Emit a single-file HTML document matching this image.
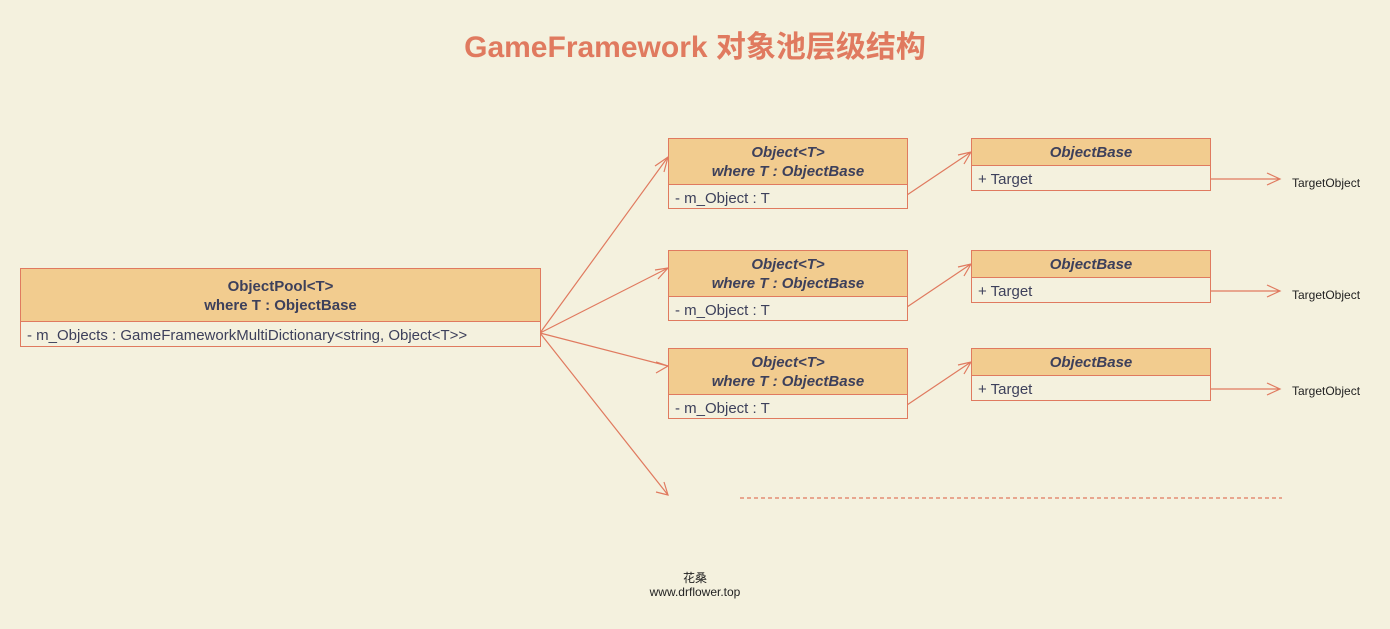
<!DOCTYPE html>
<html><head><meta charset="utf-8"><style>
body{margin:0;width:1390px;height:629px;background:#f4f1de;position:relative;overflow:hidden;font-family:"Liberation Sans","Noto Sans CJK SC",sans-serif;color:#3d405b}
.t{position:absolute;left:0;width:1390px;top:22px;text-align:center;font-size:30px;font-weight:bold;color:#e07a5f}
.box{position:absolute;border:1px solid #e07a5f;background:#f4f1de;box-sizing:border-box}
.h{background:#f2cc8f;border-bottom:1px solid #e07a5f;text-align:center;font-weight:bold;font-size:15px;line-height:19px;box-sizing:border-box}
.i{font-style:italic}
.r{font-size:15px;padding-left:6px;line-height:24px;padding-top:2px}
.s{position:absolute;font-size:12px;color:#222}
</style></head><body>
<div class="t">GameFramework 对象池层级结构</div>
<svg style="position:absolute;left:0;top:0" width="1390" height="629" fill="none" stroke="#e07a5f" stroke-width="1.2">
<path d="M540 333 L668 157 M540 333 L668 268 M540 333 L668 366 M540 333 L668 495"/>
<path d="M655 166 L668 157 L664 172 M655 270 L668 268 L658 279 M656 362 L668 366 L656 373 M656 492 L668 495 L664 482"/>
<path d="M907 195 L971 152 M958 155 L971 152 L964 164"/>
<path d="M907 307 L971 264 M958 267 L971 264 L964 276"/>
<path d="M907 405 L971 362 M958 365 L971 362 L964 374"/>
<path d="M1210 179 L1280 179 M1267 173 L1280 179 L1267 185"/>
<path d="M1210 291 L1280 291 M1267 285 L1280 291 L1267 297"/>
<path d="M1210 389 L1280 389 M1267 383 L1280 389 L1267 395"/>
<path d="M740 498 L1282 498" stroke-dasharray="4 3"/>
</svg>
<div class="box" style="left:20px;top:268px;width:521px;height:79px"><div class="h" style="height:53px;padding-top:8px">ObjectPool&lt;T&gt;<br>where T : ObjectBase</div><div class="r">- m_Objects : GameFrameworkMultiDictionary&lt;string, Object&lt;T&gt;&gt;</div></div>
<div class="box" style="left:668px;top:138px;width:240px;height:71px"><div class="h i" style="height:46px;padding-top:4px">Object&lt;T&gt;<br>where T : ObjectBase</div><div class="r">- m_Object : T</div></div>
<div class="box" style="left:668px;top:250px;width:240px;height:71px"><div class="h i" style="height:46px;padding-top:4px">Object&lt;T&gt;<br>where T : ObjectBase</div><div class="r">- m_Object : T</div></div>
<div class="box" style="left:668px;top:348px;width:240px;height:71px"><div class="h i" style="height:46px;padding-top:4px">Object&lt;T&gt;<br>where T : ObjectBase</div><div class="r">- m_Object : T</div></div>
<div class="box" style="left:971px;top:138px;width:240px;height:53px"><div class="h i" style="height:27px;padding-top:4px">ObjectBase</div><div class="r">+ Target</div></div>
<div class="box" style="left:971px;top:250px;width:240px;height:53px"><div class="h i" style="height:27px;padding-top:4px">ObjectBase</div><div class="r">+ Target</div></div>
<div class="box" style="left:971px;top:348px;width:240px;height:53px"><div class="h i" style="height:27px;padding-top:4px">ObjectBase</div><div class="r">+ Target</div></div>
<div class="s" style="left:1292px;top:176px">TargetObject</div>
<div class="s" style="left:1292px;top:288px">TargetObject</div>
<div class="s" style="left:1292px;top:384px">TargetObject</div>
<div class="s" style="left:0;width:1390px;text-align:center;top:569px">花桑</div>
<div class="s" style="left:0;width:1390px;text-align:center;top:585px">www.drflower.top</div>
</body></html>
